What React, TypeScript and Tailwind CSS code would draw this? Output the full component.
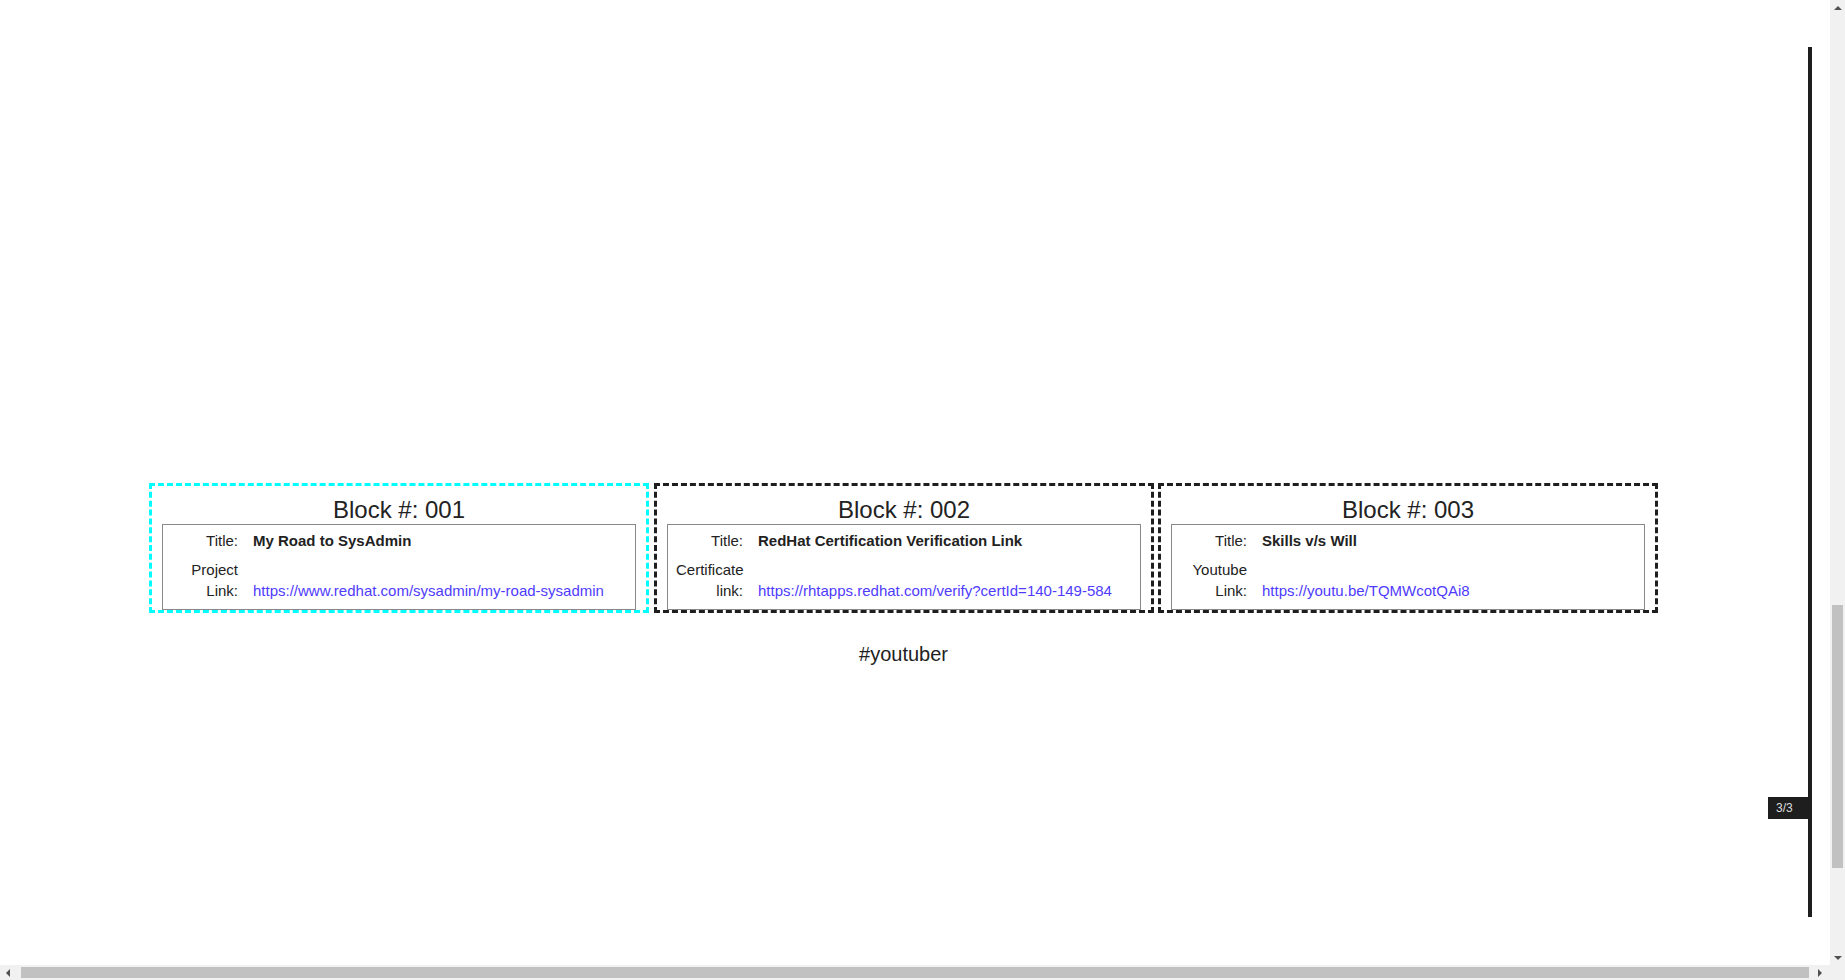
import React from "react";

type Block = {
  id: string;
  title: string;
  label: [string, string];
  link: string;
  cls: string;
};

const blocks: Block[] = [
  {
    id: "001",
    title: "My Road to SysAdmin",
    label: ["Project", "Link:"],
    link: "https://www.redhat.com/sysadmin/my-road-sysadmin",
    cls: "w-[500px] border-[3px] border-dashed border-[#00ffff] px-[10px] pt-[10px]",
  },
  {
    id: "002",
    title: "RedHat Certification Verification Link",
    label: ["Certificate", "link:"],
    link: "https://rhtapps.redhat.com/verify?certId=140-149-584",
    cls: "ml-[5px] w-[500px] border-[3px] border-dashed border-[#1e1e1e] px-[10px] pt-[10px]",
  },
  {
    id: "003",
    title: "Skills v/s Will",
    label: ["Youtube", "Link:"],
    link: "https://youtu.be/TQMWcotQAi8",
    cls: "ml-[4px] w-[500px] border-[3px] border-dashed border-[#1e1e1e] px-[10px] pt-[10px]",
  },
];

function BlockCard({ b }: { b: Block }) {
  return (
    <div className={b.cls}>
      <div className="text-center text-[24px] leading-[28px] text-[#222]">
        Block #: {b.id}
      </div>
      <div className="border border-[#888] pt-[5px] pb-[8px] pl-[8px]">
        <div className="grid grid-cols-[67px_1fr] gap-x-[15px] gap-y-[8px] items-end text-[15px] leading-[21px]">
          <div className="text-right">Title:</div>
          <div className="font-bold">{b.title}</div>
          <div className="text-right">
            <div>{b.label[0]}</div>
            <div>{b.label[1]}</div>
          </div>
          <div>
            <a href="#" className="text-[#4f3bff]">
              {b.link}
            </a>
          </div>
        </div>
      </div>
    </div>
  );
}

export default function App() {
  return (
    <div className="w-[1845px] h-[980px] overflow-hidden bg-white flex flex-col font-['Liberation_Sans',Arial,sans-serif] text-[#222]">
      <div className="flex flex-1 min-h-0">
        <div className="relative flex-1">
          <div className="ml-[149px] pt-[483px] w-[1509px]">
            <div className="flex">
              {blocks.map((b) => (
                <BlockCard key={b.id} b={b} />
              ))}
            </div>
            <p className="mt-[30px] text-center text-[20px] leading-[23px]">#youtuber</p>
          </div>
          <div className="absolute left-[1808px] top-[47px] w-[4px] h-[870px] bg-[#1e1e1e]" />
          <div className="absolute left-[1768px] top-[797px] w-[44px] h-[22px] bg-[#1e1e1e] text-[#dddddd] text-[12px] leading-[22px] pl-[8px]">
            3/3
          </div>
        </div>
        {/* vertical scrollbar */}
        <div className="w-[15px] bg-[#f1f1f1] flex flex-col items-center">
          <div className="h-[15px] flex items-center justify-center">
            <div className="w-0 h-0 border-x-[4px] border-x-transparent border-b-[4px] border-b-[#505050]" />
          </div>
          <div className="h-[590px]" />
          <div className="w-[11px] h-[263px] bg-[#c1c1c1]" />
          <div className="flex-1" />
          <div className="h-[15px] flex items-center justify-center">
            <div className="w-0 h-0 border-x-[4px] border-x-transparent border-t-[4px] border-t-[#505050]" />
          </div>
        </div>
      </div>
      {/* horizontal scrollbar */}
      <div className="h-[15px] flex bg-[#f1f1f1]">
        <div className="w-[15px] flex items-center justify-center">
          <div className="w-0 h-0 border-y-[4px] border-y-transparent border-r-[4px] border-r-[#505050]" />
        </div>
        <div className="w-[6px]" />
        <div className="self-center w-[1788px] h-[11px] bg-[#c1c1c1]" />
        <div className="flex-1 flex items-center justify-center">
          <div className="w-0 h-0 border-y-[4px] border-y-transparent border-l-[4px] border-l-[#505050]" />
        </div>
        <div className="w-[15px] bg-[#f1f1f1]" />
      </div>
    </div>
  );
}
